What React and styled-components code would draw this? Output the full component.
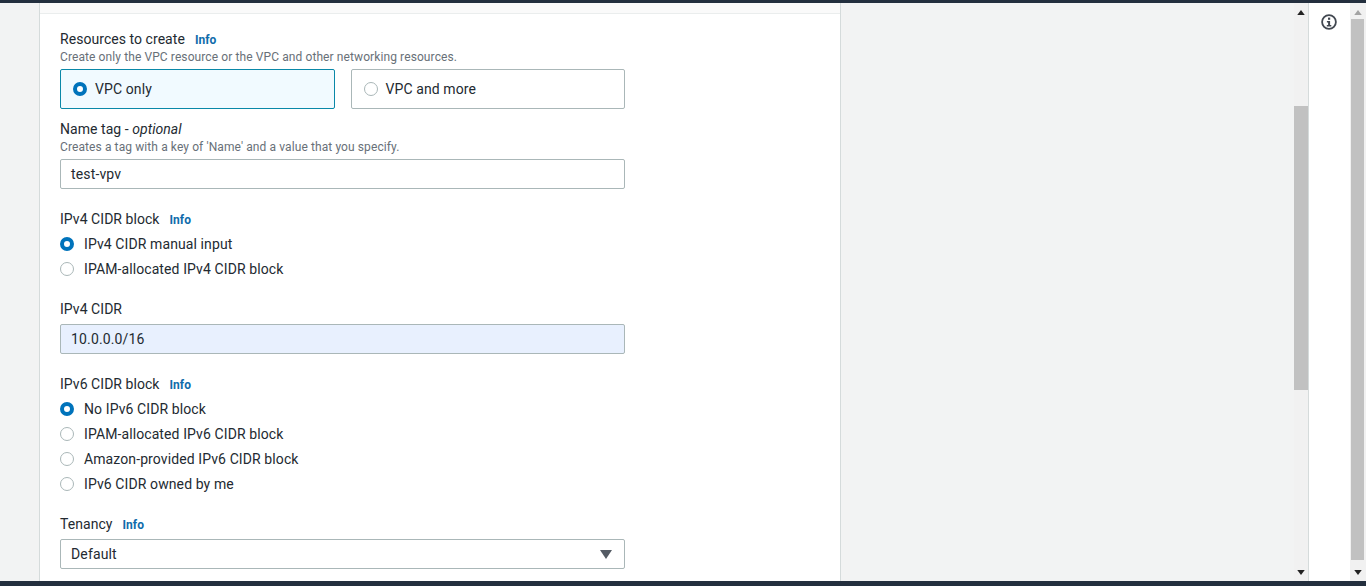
import React from "react";
import styled, { createGlobalStyle } from "styled-components";

const GlobalStyle = createGlobalStyle`
  html, body {
    margin: 0;
    height: 100%;
    overflow: hidden;
  }
  body {
    font-family: Roboto, "Open Sans", "Liberation Sans", sans-serif;
    color: #232a31;
  }
`;

const ipv4Options = [
  { label: "IPv4 CIDR manual input", checked: true },
  { label: "IPAM-allocated IPv4 CIDR block" },
];

const ipv6Options = [
  { label: "No IPv6 CIDR block", checked: true },
  { label: "IPAM-allocated IPv6 CIDR block" },
  { label: "Amazon-provided IPv6 CIDR block" },
  { label: "IPv6 CIDR owned by me" },
];

const Arrow = ({ down, color = "#232323" }) => (
  <ArrowIcon viewBox="0 0 9 6" aria-hidden="true">
    <path d={down ? "M0 0h9L4.5 6z" : "M0 6h9L4.5 0z"} fill={color} />
  </ArrowIcon>
);

const Label = ({ children, info }) => (
  <LabelRow>
    <LabelText>{children}</LabelText>
    {info && <InfoLink>Info</InfoLink>}
  </LabelRow>
);

const RadioGroup = ({ options }) => (
  <Radios>
    {options.map((option) => (
      <RadioRow key={option.label}>
        <RadioDot $checked={option.checked} />
        {option.label}
      </RadioRow>
    ))}
  </Radios>
);

const App = () => (
  <Page>
    <GlobalStyle />
    <TopBar />
    <Middle>
      <MainArea>
        <Panel>
          <PanelHeader />
          <Form>
            <Label info>Resources to create</Label>
            <Description>
              Create only the VPC resource or the VPC and other networking resources.
            </Description>
            <Tiles>
              <Tile $selected>
                <RadioDot $checked />
                VPC only
              </Tile>
              <Tile>
                <RadioDot />
                VPC and more
              </Tile>
            </Tiles>

            <Field $gap={10}>
              <Label>
                Name tag - <em>optional</em>
              </Label>
              <Description>Creates a tag with a key of 'Name' and a value that you specify.</Description>
              <Input $top={4}>test-vpv</Input>
            </Field>

            <Field $gap={20}>
              <Label info>IPv4 CIDR block</Label>
              <RadioGroup options={ipv4Options} />
            </Field>

            <Field $gap={18}>
              <Label>IPv4 CIDR</Label>
              <Input $top={5} $autofilled>
                10.0.0.0/16
              </Input>
            </Field>

            <Field $gap={20}>
              <Label info>IPv6 CIDR block</Label>
              <RadioGroup options={ipv6Options} />
            </Field>

            <Field $gap={18}>
              <Label info>Tenancy</Label>
              <Input $top={5}>
                Default
                <SelectCaret viewBox="0 0 12 9" aria-hidden="true">
                  <path d="M0 0h12L6 9z" fill="#545b64" />
                </SelectCaret>
              </Input>
            </Field>
          </Form>
        </Panel>
      </MainArea>
      <InnerScrollbar>
        <Arrow />
        <InnerThumb />
        <Spacer />
        <Arrow down />
      </InnerScrollbar>
      <ToolsRail>
        <InfoIcon viewBox="0 0 16 16" aria-hidden="true">
          <circle cx="8" cy="8" r="6.9" fill="none" stroke="#414750" strokeWidth="1.8" />
          <rect x="7" y="3.6" width="2.2" height="2.2" fill="#414750" />
          <path d="M5.9 7h3.2v4h1.2v1.4H5.8V11h1.3V8.4H5.9z" fill="#414750" />
        </InfoIcon>
      </ToolsRail>
      <OuterScrollbar>
        <Arrow color="#a3a3a3" />
        <OuterThumb />
        <Arrow down />
      </OuterScrollbar>
    </Middle>
    <BottomBar />
  </Page>
);

const Page = styled.div`
  display: flex;
  flex-direction: column;
  height: 100vh;
  background: #f2f3f3;
`;

const TopBar = styled.div`
  flex: none;
  height: 3px;
  background: #232f3e;
`;

const BottomBar = styled.div`
  flex: none;
  height: 5px;
  background: #232f3e;
`;

const Middle = styled.div`
  flex: 1;
  min-height: 0;
  display: flex;
`;

const MainArea = styled.main`
  flex: 1;
  min-width: 0;
  padding-left: 39px;
  overflow: hidden;
`;

const Panel = styled.section`
  box-sizing: border-box;
  width: 802px;
  height: 100%;
  background: #fff;
  border-left: 1px solid #d5dbdb;
  border-right: 1px solid #d5dbdb;
  overflow: hidden;
`;

const PanelHeader = styled.div`
  height: 10px;
  background: #fafafa;
  border-bottom: 1px solid #eaeded;
`;

const Form = styled.div`
  width: 565px;
  padding: 15px 0 0 20px;
`;

const LabelRow = styled.div`
  display: flex;
  align-items: center;
  height: 20px;
  font-size: 14px;
  letter-spacing: 0.05px;
`;

const LabelText = styled.span`
  white-space: pre-wrap;
`;

const InfoLink = styled.span`
  margin: 1px 0 0 10px;
  font-size: 12px;
  font-weight: 700;
  color: #0f6cab;
`;

const Description = styled.div`
  height: 16px;
  line-height: 16px;
  font-size: 12px;
  letter-spacing: 0.1px;
  color: #687078;
`;

const Tiles = styled.div`
  display: grid;
  grid-template-columns: 1fr 1fr;
  gap: 16px;
  margin-top: 4px;
`;

const Tile = styled.div`
  box-sizing: border-box;
  display: flex;
  align-items: center;
  gap: 8px;
  height: 40px;
  padding-left: 12px;
  font-size: 14px;
  letter-spacing: 0.1px;
  background: ${(p) => (p.$selected ? "#f1faff" : "#fff")};
  border: 1px solid ${(p) => (p.$selected ? "#0a88a8" : "#aab7b8")};
  border-radius: 2px;
`;

const RadioDot = styled.span`
  flex: none;
  box-sizing: border-box;
  width: 14px;
  height: 14px;
  border-radius: 50%;
  background: #fff;
  border: ${(p) => (p.$checked ? "4px solid #0073bb" : "1px solid #aab7b8")};
`;

const Field = styled.div`
  margin-top: ${(p) => p.$gap}px;
`;

const Input = styled.div`
  box-sizing: border-box;
  display: flex;
  align-items: center;
  justify-content: space-between;
  height: 30px;
  margin-top: ${(p) => p.$top}px;
  padding: 0 12px 0 10px;
  font-size: 14px;
  letter-spacing: 0.15px;
  background: ${(p) => (p.$autofilled ? "#e8f0fe" : "#fff")};
  border: 1px solid #aab7b8;
  border-radius: 2px;
`;

const SelectCaret = styled.svg`
  width: 12px;
  height: 9px;
`;

const Radios = styled.div`
  margin-top: 2px;
`;

const RadioRow = styled.div`
  display: flex;
  align-items: center;
  gap: 10px;
  height: 25px;
  font-size: 14px;
  letter-spacing: 0.1px;
`;

const ArrowIcon = styled.svg`
  flex: none;
  display: block;
  width: 8px;
  height: 5px;
  margin: 0 auto;
`;

const InnerScrollbar = styled.div`
  flex: none;
  display: flex;
  flex-direction: column;
  width: 14px;
  padding: 7px 0 6px;
  box-sizing: border-box;
  background: #f1f1f1;
`;

const InnerThumb = styled.div`
  flex: none;
  height: 284px;
  margin-top: 91px;
  background: #c1c1c1;
`;

const Spacer = styled.div`
  flex: 1;
`;

const ToolsRail = styled.aside`
  flex: none;
  box-sizing: border-box;
  width: 42px;
  padding-top: 11px;
  background: #fff;
  border-left: 1px solid #d5dbdb;
`;

const InfoIcon = styled.svg`
  display: block;
  width: 16px;
  height: 16px;
  margin-left: 12px;
`;

const OuterScrollbar = styled.div`
  flex: none;
  display: flex;
  flex-direction: column;
  justify-content: space-between;
  box-sizing: border-box;
  width: 16px;
  padding: 7px 0 6px;
  background: #f1f1f1;
`;

const OuterThumb = styled.div`
  flex: 1;
  margin: 4px 2px 10px 1px;
  background: #c1c1c1;
`;

export default App;
